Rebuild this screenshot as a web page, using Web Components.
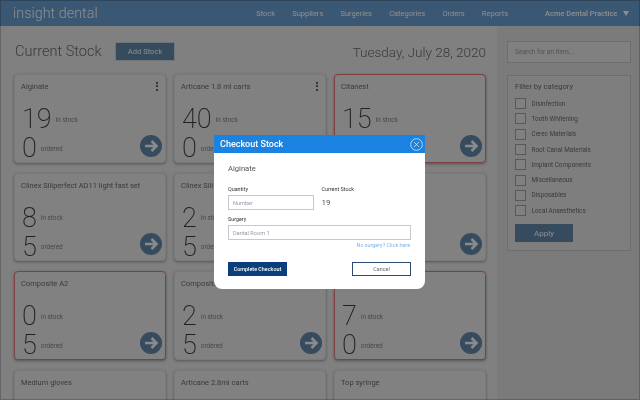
<!DOCTYPE html>
<html>
<head>
<meta charset="utf-8">
<title>insight dental</title>
<style>
  html, body { margin: 0; padding: 0; width: 640px; height: 400px; overflow: hidden; background: #dcdcdc; }
  body { font-family: Roboto, "Liberation Sans", sans-serif; position: relative; filter: blur(.35px); }
</style>
</head>
<body>
<app-header></app-header>
<stock-page>
  <stock-card name="Alginate" stock="19" ordered="0" menu></stock-card>
  <stock-card name="Articane 1.8 ml carts" stock="40" ordered="0" menu></stock-card>
  <stock-card name="Citanest" stock="15" low></stock-card>
  <stock-card name="Clinex Siliperfect AD11 light fast set" stock="8" ordered="5"></stock-card>
  <stock-card name="Clinex Sili" stock="2" ordered="5"></stock-card>
  <stock-card></stock-card>
  <stock-card name="Composite A2" stock="0" ordered="5" low></stock-card>
  <stock-card name="Composite" stock="2" ordered="5"></stock-card>
  <stock-card stock="7" ordered="0" low></stock-card>
  <stock-card name="Medium gloves"></stock-card>
  <stock-card name="Articane 2.8ml carts"></stock-card>
  <stock-card name="Top syringe"></stock-card>
  <filter-panel slot="side"></filter-panel>
</stock-page>
<page-scrim></page-scrim>
<checkout-modal></checkout-modal>

<script>
class AppHeader extends HTMLElement {
  constructor() {
    super();
    this.attachShadow({mode: 'open'});
    this.shadowRoot.innerHTML = `
      <style>
        :host { display: flex; align-items: center; box-sizing: border-box; height: 26px; padding: 0 5px 0 13px; background: #6496c8; color: #f4f4f4; font-family: Roboto, sans-serif; }
        .logo { font-size: 14.4px; font-weight: 300; flex: 1; }
        nav { display: flex; gap: 17.2px; font-size: 7.5px; }
        .practice { margin-left: 37px; font-size: 7.5px; font-weight: 500; display: flex; align-items: center; gap: 6px; width: 90px; white-space: nowrap; }
        .tri { flex: none; width: 0; height: 0; border: 3.5px solid transparent; border-top: 5px solid #f4f4f4; border-bottom: 0; }
      </style>
      <div class="logo">insight dental</div>
      <nav><span>Stock</span><span>Suppliers</span><span>Surgeries</span><span>Categories</span><span>Orders</span><span>Reports</span></nav>
      <div class="practice"><span>Acme Dental Practice</span><i class="tri"></i></div>`;
  }
}
customElements.define('app-header', AppHeader);

class StockPage extends HTMLElement {
  constructor() {
    super();
    this.attachShadow({mode: 'open'});
    this.shadowRoot.innerHTML = `
      <style>
        :host { display: flex; height: 374px; overflow: hidden; font-family: Roboto, sans-serif; }
        main { width: 472px; padding: 17px 11px 0 14px; flex: none; }
        .top { display: flex; align-items: center; height: 17px; margin-bottom: 14px; }
        h1 { margin: 0 0 0 1px; font-size: 14.5px; font-weight: 300; color: #666; width: 101px; white-space: nowrap; }
        button { width: 58px; height: 17px; border: 0; background: #5f82a4; color: #f0f0f0; font: 7.6px Roboto, sans-serif; padding: 0; box-shadow: 0 0 0 .5px #a8b8c8; }
        .date { margin-left: auto; font-size: 13.5px; font-weight: 300; color: #666; }
        .grid { display: grid; grid-template-columns: repeat(3, 152px); grid-auto-rows: 88.7px; gap: 10px 8px; }
        aside { flex: 1; background: #d4d4d4; padding: 15px 9px 0 10px; }
      </style>
      <main>
        <div class="top"><h1>Current Stock</h1><button>Add Stock</button><span class="date">Tuesday, July 28, 2020</span></div>
        <div class="grid"><slot></slot></div>
      </main>
      <aside><slot name="side"></slot></aside>`;
  }
}
customElements.define('stock-page', StockPage);

class StockCard extends HTMLElement {
  constructor() {
    super();
    this.attachShadow({mode: 'open'});
    const menu = this.hasAttribute('menu') ? '<span class="dots"><i></i><i></i><i></i></span>' : '';
    const row = (attr, label) => this.hasAttribute(attr)
      ? `<div class="row"><b>${this.getAttribute(attr)}</b><small>${label}</small></div>`
      : '<div class="row"></div>';
    this.shadowRoot.innerHTML = `
      <style>
        :host { display: block; position: relative; box-sizing: border-box; background: #dedede; border-radius: 4px; border: 1px solid #d2d2d2; box-shadow: 0 1px 3px rgba(0,0,0,.35); padding: 6px 6px; color: #666; }
        :host([low]) { border-color: #e07070; }
        .name { font-size: 7.5px; height: 24px; line-height: 11px; white-space: nowrap; overflow: hidden; }
        .row { display: flex; align-items: center; height: 29px; gap: 4px; }
        b { font-size: 27px; font-weight: 200; color: #3c3c3c; padding-left: 1px; line-height: 29px; }
        small { font-size: 6.4px; color: #7c7c7c; }
        .dots { position: absolute; right: 7px; top: 7px; display: flex; flex-direction: column; gap: 1.4px; }
        .dots i { width: 2px; height: 2px; border-radius: 50%; background: #333; }
        svg { position: absolute; right: 3px; bottom: 5px; width: 22px; height: 22px; }
      </style>
      <div class="name">${this.getAttribute('name') || ''}</div>
      ${menu}
      ${row('stock', 'in stock')}
      ${row('ordered', 'ordered')}
      <svg viewBox="0 0 22 22"><circle cx="11" cy="11" r="11" fill="#5f82a4"/><path d="M5 11h11M11.5 6l5 5-5 5" fill="none" stroke="#eee" stroke-width="2.6"/></svg>`;
  }
}
customElements.define('stock-card', StockCard);

class FilterPanel extends HTMLElement {
  constructor() {
    super();
    this.attachShadow({mode: 'open'});
    const cats = ['Disinfection','Tooth Whitening','Cerec Materials','Root Canal Materials','Implant Components','Miscellaneous','Disposables','Local Anaesthetics'];
    this.shadowRoot.innerHTML = `
      <style>
        :host { display: block; font-family: Roboto, sans-serif; color: #666; }
        .search { height: 22px; box-sizing: border-box; border: 1px solid #bcbcbc; background: #dcdcdc; font-size: 6.6px; color: #919191; display: flex; align-items: center; padding-left: 7px; margin-bottom: 12px; }
        .panel { box-sizing: border-box; height: 176px; border: 1px solid #bcbcbc; background: #dadada; padding: 6px 7px; }
        h2 { margin: 0 0 4px; font-size: 7.6px; font-weight: 400; line-height: 10px; }
        .cat { display: flex; align-items: center; gap: 5.5px; height: 15.3px; font-size: 6.4px; }
        .cat i { width: 9px; height: 9px; border: 1px solid #999; background: #dcdcdc; flex: none; }
        button { display: block; width: 58px; height: 18px; margin-top: 6px; border: 0; padding: 0; background: #5f82a4; color: #f0f0f0; font: 8px Roboto, sans-serif; }
      </style>
      <div class="search">Search for an item...</div>
      <div class="panel">
        <h2>Filter by category</h2>
        ${cats.map(c => `<div class="cat"><i></i><span>${c}</span></div>`).join('')}
        <button>Apply</button>
      </div>`;
  }
}
customElements.define('filter-panel', FilterPanel);

class PageScrim extends HTMLElement {
  constructor() {
    super();
    this.attachShadow({mode: 'open'});
    this.shadowRoot.innerHTML = `<style>:host { position: absolute; inset: 0; background: rgba(0,0,0,.42); box-shadow: inset 0 0 0 1px rgba(0,0,0,.2); }</style>`;
  }
}
customElements.define('page-scrim', PageScrim);

class CheckoutModal extends HTMLElement {
  constructor() {
    super();
    this.attachShadow({mode: 'open'});
    this.shadowRoot.innerHTML = `
      <style>
        :host { position: absolute; left: 214px; top: 135px; width: 211px; height: 154px; background: #fff; border-radius: 0 0 8px 8px; overflow: hidden; font-family: Roboto, sans-serif; color: #555; }
        .head { height: 18px; background: #1a82e0; color: #fff; display: flex; align-items: center; justify-content: space-between; padding: 0 2.5px 0 6px; font-size: 9px; font-weight: 500; }
        .head svg { width: 13px; height: 13px; }
        .body { padding: 11px 14px 0; }
        .item { font-size: 7.6px; line-height: 10px; margin-bottom: 12px; }
        label { display: block; font-size: 5.4px; line-height: 7px; margin-bottom: 2px; color: #333; }
        .cols { display: flex; gap: 7.5px; }
        .field { box-sizing: border-box; height: 15px; border: 1px solid #c5c8d0; font-size: 5.6px; color: #99a; display: flex; align-items: center; padding-left: 4px; }
        .qty { width: 86px; }
        .val { font-size: 8px; line-height: 15px; }
        .sur { margin-top: 6px; }
        .link { text-align: right; font-size: 5.4px; color: #7ab4f0; margin-top: 2px; padding-right: 1px; line-height: 7px; }
        .btns { display: flex; justify-content: space-between; margin-top: 13px; }
        button { width: 59px; height: 14px; font: 5.4px Roboto, sans-serif; padding: 0; }
        .go { background: #0a3f7c; color: #fff; border: 0; font-weight: 500; }
        .no { background: #fff; color: #667; border: 1px solid #2a4a70; }
      </style>
      <div class="head"><span>Checkout Stock</span><svg viewBox="0 0 12 12"><circle cx="6" cy="6" r="5.4" fill="none" stroke="#fff" stroke-width=".6"/><path d="M3.8 3.8l4.4 4.4M8.2 3.8l-4.4 4.4" stroke="#fff" stroke-width=".6"/></svg></div>
      <div class="body">
        <div class="item">Alginate</div>
        <div class="cols">
          <div><label>Quantity</label><div class="field qty">Number</div></div>
          <div><label>Current Stock</label><div class="val">19</div></div>
        </div>
        <div class="sur"><label>Surgery</label><div class="field">Dental Room 1</div></div>
        <div class="link">No surgery? Click here</div>
        <div class="btns"><button class="go">Complete Checkout</button><button class="no">Cancel</button></div>
      </div>`;
  }
}
customElements.define('checkout-modal', CheckoutModal);
</script>
</body>
</html>
